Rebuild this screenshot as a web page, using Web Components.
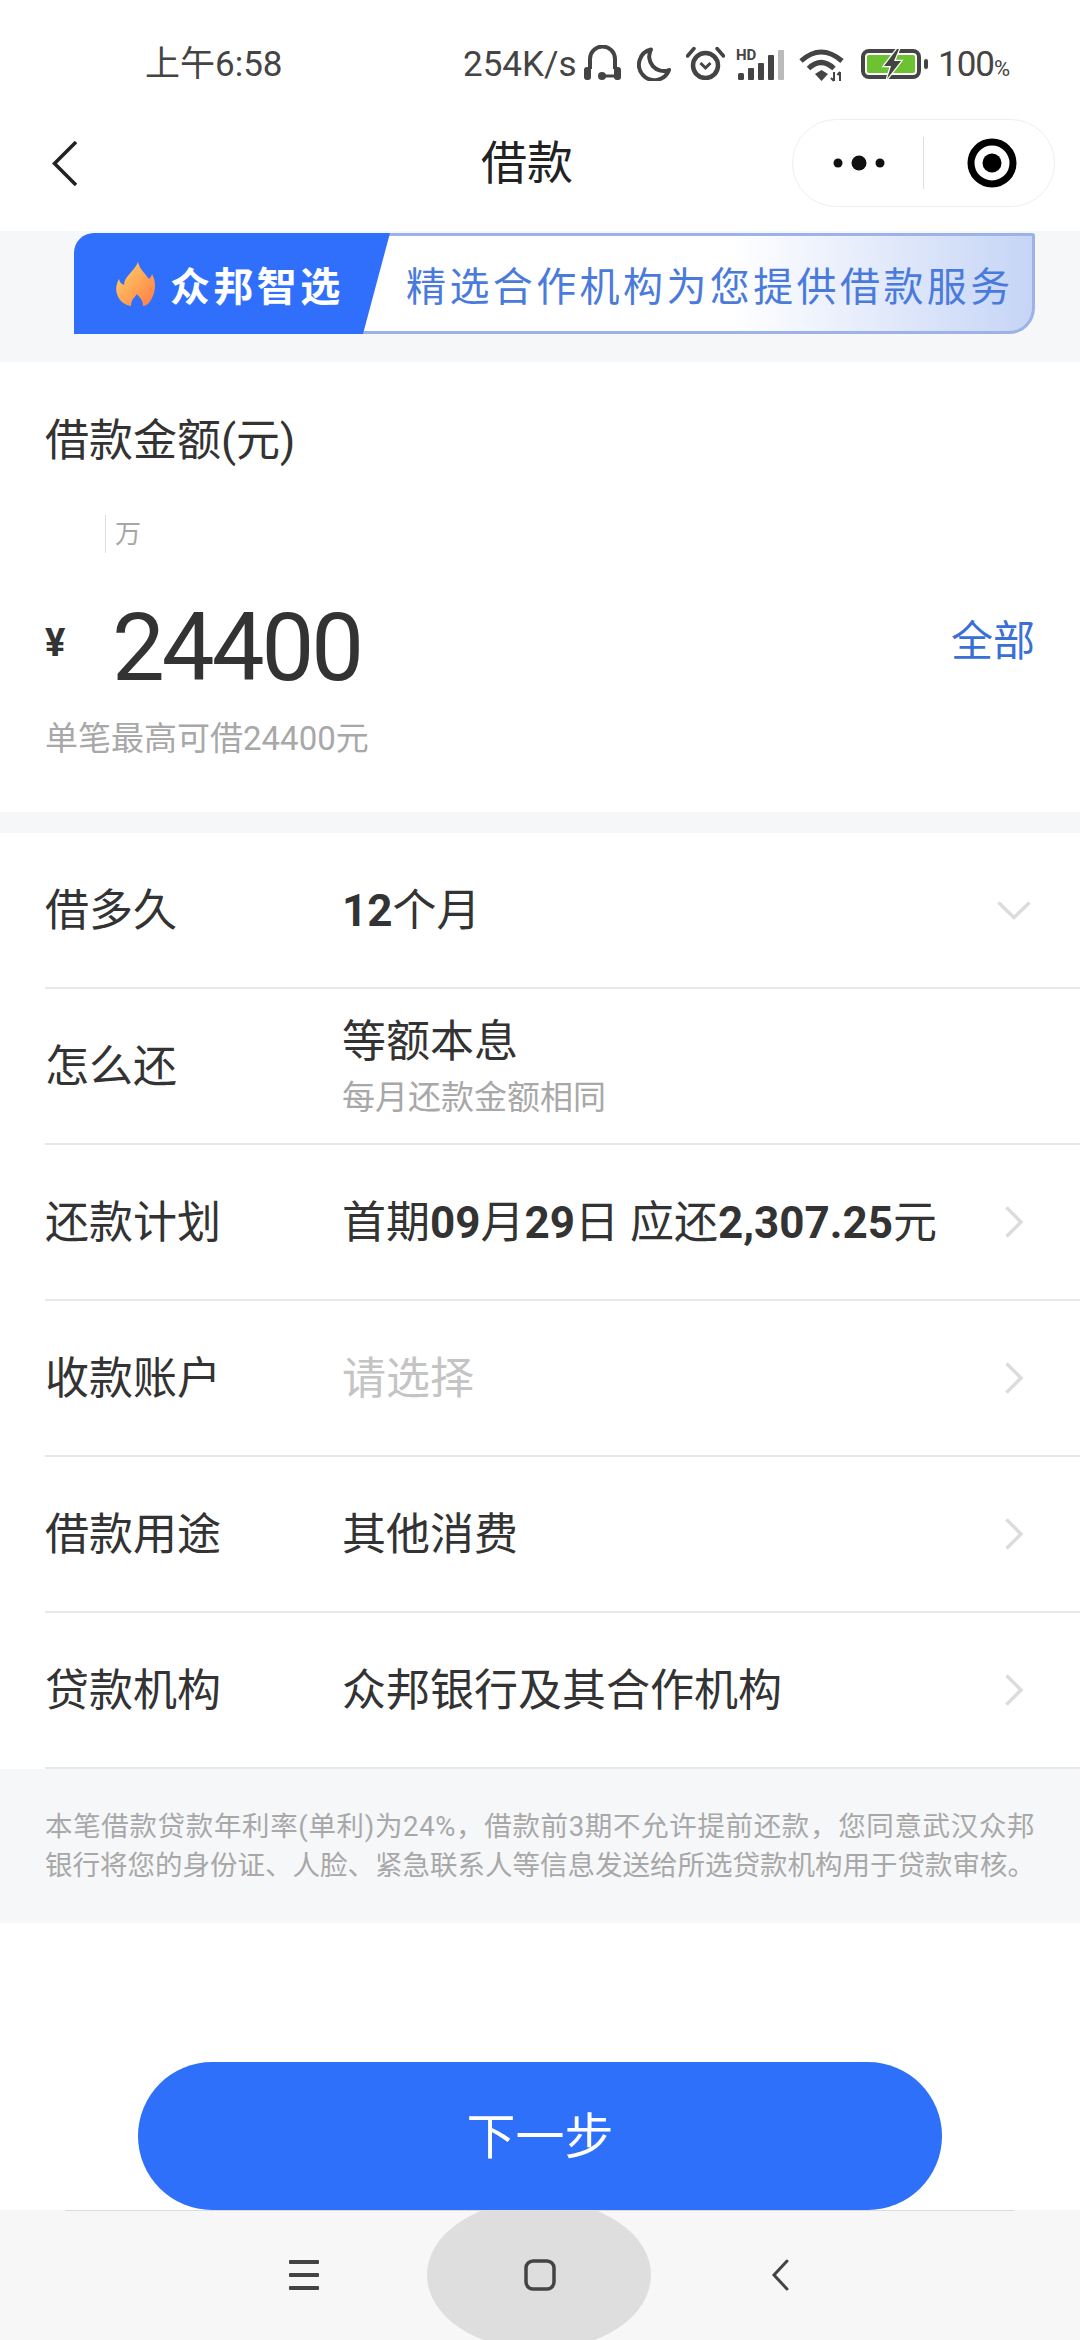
<!DOCTYPE html>
<html lang="zh">
<head>
<meta charset="utf-8">
<title>借款</title>
<style>
    html, body { margin: 0; padding: 0; background: #fff; }
    body {
        width: 1080px;
        height: 2340px;
        overflow: hidden;
        font-family: Roboto, "Noto Sans CJK SC", sans-serif;
        color: #333;
    }
    b { font-weight: 700; }
</style>
</head>
<body>
<loan-page>
    <status-bar></status-bar>
    <title-bar title="借款"></title-bar>
    <promo-banner></promo-banner>
    <amount-card></amount-card>
    <div style="height:21px;background:#f6f7f9"></div>
    <loan-row label="借多久" chevron="down"><span><b>12</b>个月</span></loan-row>
    <loan-row label="怎么还" chevron="none"><span>等额本息</span><span slot="sub">每月还款金额相同</span></loan-row>
    <loan-row label="还款计划"><span>首期<b>09</b>月<b>29</b>日 应还<b>2,307.25</b>元</span></loan-row>
    <loan-row label="收款账户"><span style="color:#c4c4c4">请选择</span></loan-row>
    <loan-row label="借款用途"><span>其他消费</span></loan-row>
    <loan-row label="贷款机构"><span>众邦银行及其合作机构</span></loan-row>
    <loan-note>
        <span style="letter-spacing:.65px">本笔借款贷款年利率(单利)为24%，借款前3期不允许提前还款，您同意武汉众邦</span><br>银行将您的身份证、人脸、紧急联系人等信息发送给所选贷款机构用于贷款审核。
    </loan-note>
    <next-button>下一步</next-button>
    <nav-keys></nav-keys>
</loan-page>

<script>
class LoanPage extends HTMLElement {
    constructor() {
        super();
        this.attachShadow({ mode: 'open' });
        this.shadowRoot.innerHTML = `
        <style>
            :host { display: flex; flex-direction: column; width: 1080px; height: 2340px; }
        </style>
        <slot></slot>`;
    }
}

class StatusBar extends HTMLElement {
    constructor() {
        super();
        this.attachShadow({ mode: 'open' });
        this.shadowRoot.innerHTML = `
        <style>
            :host {
                display: flex;
                align-items: flex-start;
                height: 100px;
                padding: 45px 69px 0 145px;
                box-sizing: border-box;
                color: #444;
            }
            .time { font-size: 35px; line-height: 40px; }
            .right { margin-left: auto; display: flex; align-items: flex-start; }
            .speed { font-size: 35px; line-height: 40px; width: 112px; white-space: nowrap; }
            .pct { font-size: 35px; line-height: 40px; letter-spacing: -1px; margin-left: 10px; width: 73px; white-space: nowrap; }
            .pct small { font-size: 22px; letter-spacing: 0; }
            svg { display: block; flex: none; }
        </style>
        <div class="time">上午6:58</div>
        <div class="right">
            <div class="speed">254K/s</div>
            <svg style="margin-left:9px" width="37" height="35" viewBox="0 0 37 35" fill="none" stroke="#444" stroke-width="4">
                <path d="M6 24V14a12.5 12.5 0 0 1 25 0v10"/>
                <rect x="0" y="22" width="7" height="13" rx="3" fill="#444" stroke="none"/>
                <rect x="30" y="22" width="7" height="13" rx="3" fill="#444" stroke="none"/>
                <path d="M32 31H20" stroke-width="3"/>
                <circle cx="18" cy="31" r="4" fill="#444" stroke="none"/>
            </svg>
            <svg style="margin:2px 0 0 16px" width="34" height="34" viewBox="0 0 34 34" fill="none" stroke="#444" stroke-width="4" stroke-linejoin="round">
                <path d="M14 2.5A15.5 15.5 0 1 0 32 23 A14.5 14.5 0 0 1 14 2.5Z"/>
            </svg>
            <svg style="margin:1px 0 0 15px" width="39" height="34" viewBox="0 0 39 34" fill="none" stroke="#444">
                <circle cx="19.5" cy="19.5" r="12.5" stroke-width="4.5"/>
                <path d="M14.5 17l5 5 5-5" stroke-width="3"/>
                <path d="M1.5 10L8 2.5M37.5 10L31 2.5" stroke-width="3.5" stroke-linecap="round"/>
            </svg>
            <svg style="margin:0 0 0 11px" width="50" height="35" viewBox="0 -3 50 35">
                <text x="0" y="12" font-family="Roboto, sans-serif" font-size="15" font-weight="700" fill="#444">HD</text>
                <rect x="2" y="25" width="6" height="7" rx="1.5" fill="#444"/>
                <rect x="12" y="20" width="6" height="12" rx="1" fill="#444"/>
                <rect x="22" y="15" width="6" height="17" rx="1" fill="#444"/>
                <rect x="32" y="7" width="6" height="25" rx="1" fill="#444"/>
                <rect x="42" y="2" width="6" height="30" rx="1" fill="#bbb"/>
            </svg>
            <svg style="margin:3px 0 0 13px" width="46" height="34" viewBox="0 0 46 34" fill="none" stroke="#444">
                <path d="M2 13Q22-5 43 13" stroke-width="5"/>
                <path d="M9.5 20.500Q22 8.500 35 20.500" stroke-width="5"/>
                <path d="M16 26L22.500 22 29 26 22.500 33Z" fill="#444" stroke="none"/>
                <path d="M35 24v9M32 30l3 3M41 33v-9M38.500 27l2.500-3" stroke-width="2"/>
            </svg>
            <svg style="margin:4px 0 0 16px" width="67" height="30" viewBox="0 0 67 30">
                <rect x="2" y="2" width="56" height="26" rx="6" fill="none" stroke="#444" stroke-width="4"/>
                <rect x="6" y="6" width="48" height="18" rx="2" fill="#6cc230"/>
                <rect x="63" y="10" width="4" height="10" rx="2" fill="#444"/>
                <path d="M36 0L23 17h7l-4 13 14-18h-7l5-12Z" fill="#444" stroke="#fff" stroke-width="2.5" paint-order="stroke"/>
            </svg>
            <div class="pct">100<small>%</small></div>
        </div>`;
    }
}

class TitleBar extends HTMLElement {
    constructor() {
        super();
        this.attachShadow({ mode: 'open' });
    }

    connectedCallback() {
        this.shadowRoot.innerHTML = `
        <style>
            :host {
                display: grid;
                grid-template-columns: 429px 92px 1fr;
                align-items: center;
                height: 126px;
                margin-bottom: 5px;
                padding: 0 25px 0 52px;
                box-sizing: border-box;
                color: #222;
            }
            .title { font-size: 46px; line-height: 60px; white-space: nowrap; }
            .capsule {
                justify-self: end;
                display: flex;
                align-items: center;
                width: 263px;
                height: 88px;
                box-sizing: border-box;
                border: 1px solid #eee;
                border-radius: 44px;
            }
            .more { width: 130px; display: flex; justify-content: center; padding-left: 2px; box-sizing: border-box; }
            .sep { width: 1px; height: 52px; background: #ddd; }
            .target { flex: 1; display: flex; justify-content: center; margin-left: 6px; }
            svg { display: block; }
        </style>
        <svg width="25" height="45" viewBox="0 0 25 45" fill="none" stroke="#222" stroke-width="3.5">
            <path d="M24 1L2.5 22.5 24 44"/>
        </svg>
        <div class="title">${this.getAttribute('title')}</div>
        <div class="capsule">
            <div class="more">
                <svg width="52" height="16" viewBox="0 0 52 16" fill="#111">
                    <circle cx="5" cy="8" r="4.5"/>
                    <circle cx="26" cy="8" r="7.5"/>
                    <circle cx="47" cy="8" r="4.5"/>
                </svg>
            </div>
            <div class="sep"></div>
            <div class="target">
                <svg width="50" height="50" viewBox="0 0 50 50">
                    <circle cx="25" cy="25" r="21" fill="none" stroke="#000" stroke-width="7"/>
                    <circle cx="25" cy="25" r="9.5" fill="#000"/>
                </svg>
            </div>
        </div>`;
    }
}

class PromoBanner extends HTMLElement {
    constructor() {
        super();
        this.attachShadow({ mode: 'open' });
        this.shadowRoot.innerHTML = `
        <style>
            :host {
                display: block;
                background: #f6f7f9;
                padding: 2px 45px 28px 74px;
            }
            .banner { display: flex; height: 101px; }
            .tag {
                flex: none;
                z-index: 1;
                width: 316px;
                box-sizing: border-box;
                display: flex;
                align-items: center;
                padding-left: 42px;
                background: #2f6ffb;
                border-top-left-radius: 20px;
                clip-path: polygon(0 0, 100% 0, 289px 100%, 0 100%);
                color: #fff;
                font-size: 40px;
                font-weight: 700;
                letter-spacing: 3.4px;
            }
            .tag svg { flex: none; margin-right: 15px; }
            .slogan {
                flex: 1;
                margin-left: -27px;
                padding-left: 43px;
                display: flex;
                align-items: center;
                box-sizing: border-box;
                white-space: nowrap;
                background: linear-gradient(90deg, #fff 55%, #c6d5f6 100%);
                border: solid #9db2e8;
                border-width: 3px 3px 3px 0;
                border-radius: 0 3px 26px 0;
                color: #4a7bdc;
                font-size: 40px;
                letter-spacing: 3.4px;
            }
        </style>
        <div class="banner">
            <div class="tag">
                <svg width="39" height="44" viewBox="0 0 39 44">
                    <defs>
                        <linearGradient id="fl" x1="0" y1="0" x2="1" y2="1">
                            <stop offset="0" stop-color="#ffd76a"/>
                            <stop offset="1" stop-color="#ff7a45"/>
                        </linearGradient>
                    </defs>
                    <path d="M22 0C24 8 29 11 33 17C36 14 36 12 36 12C40 19 40 28 36 36C34 41 30 44 27 44C27 38 24 36 21 32C18 36 15 38 15 44C8 43 2 38 .5 30C-.5 25 1 21 3 17C4 21 6 22 8 23C8 14 18 10 22 0Z" fill="url(#fl)"/>
                </svg>
                众邦智选
            </div>
            <div class="slogan">精选合作机构为您提供借款服务</div>
        </div>`;
    }
}

class AmountCard extends HTMLElement {
    constructor() {
        super();
        this.attachShadow({ mode: 'open' });
        this.shadowRoot.innerHTML = `
        <style>
            :host {
                display: block;
                height: 450px;
                box-sizing: border-box;
                padding: 47px 45px 0;
            }
            .label { font-size: 44px; line-height: 64px; }
            .unit {
                margin: 42px 0 0 60px;
                height: 38px;
                padding-left: 9px;
                border-left: 1px solid #ddd;
                color: #a6a6a6;
                font-size: 26px;
                line-height: 38px;
            }
            .amount { display: flex; align-items: center; margin-top: 45px; height: 100px; }
            .yen { width: 67px; font-size: 38px; font-weight: 700; line-height: 50px; margin-top: -10px; }
            .num { font-size: 94px; line-height: 100px; letter-spacing: -3px; color: #333; }
            .all { margin-left: auto; color: #3a6fd8; font-size: 42px; line-height: 60px; margin-top: -12px; }
            .tip { margin-top: 19px; color: #a8a8a8; font-size: 33px; line-height: 44px; }
        </style>
        <div class="label">借款金额(元)</div>
        <div class="unit">万</div>
        <div class="amount">
            <div class="yen">¥</div>
            <div class="num">24400</div>
            <div class="all">全部</div>
        </div>
        <div class="tip">单笔最高可借24400元</div>`;
    }
}

class LoanRow extends HTMLElement {
    constructor() {
        super();
        this.attachShadow({ mode: 'open' });
    }

    connectedCallback() {
        const chevron = this.getAttribute('chevron') || 'right';
        let icon = '';
        if (chevron === 'right') {
            icon = '<svg width="18" height="32" viewBox="0 0 18 32" fill="none" stroke="#dcdcdc" stroke-width="3.5"><path d="M1.5 1.5L16 16 1.5 30.5"/></svg>';
        } else if (chevron === 'down') {
            icon = '<svg width="34" height="19" viewBox="0 0 34 19" fill="none" stroke="#dcdcdc" stroke-width="3.5"><path d="M1.5 1.5L17 16.5 32.5 1.5"/></svg>';
        }
        this.shadowRoot.innerHTML = `
        <style>
            :host { display: block; padding-left: 45px; height: 156px; box-sizing: border-box; }
            .row {
                display: flex;
                align-items: center;
                height: 100%;
                box-sizing: border-box;
                border-bottom: 2px solid #e8e8e8;
                font-size: 44px;
                line-height: 56px;
                color: #333;
            }
            .label { width: 297px; flex: none; padding-top: 2px; }
            .value { flex: 1; display: flex; flex-direction: column; white-space: nowrap; padding-top: 2px; }
            .sub { color: #a8a8a8; font-size: 33px; line-height: 44px; margin-top: 6px; }
            .icon { width: 90px; flex: none; display: flex; justify-content: center; padding-right: 42px; box-sizing: border-box; }
            svg { display: block; flex: none; }
            ::slotted(span) { display: block; }
        </style>
        <div class="row">
            <div class="label">${this.getAttribute('label')}</div>
            <div class="value">
                <slot></slot>
                ${this.querySelector('[slot=sub]') ? '<div class="sub"><slot name="sub"></slot></div>' : ''}
            </div>
            <div class="icon">${icon}</div>
        </div>`;
    }
}

class LoanNote extends HTMLElement {
    constructor() {
        super();
        this.attachShadow({ mode: 'open' });
        this.shadowRoot.innerHTML = `
        <style>
            :host {
                display: block;
                background: #f6f7f9;
                height: 154px;
                box-sizing: border-box;
                padding: 39px 30px 0 45px;
                color: #a8a8a8;
                font-size: 27.5px;
                line-height: 38.5px;
                white-space: nowrap;
            }
        </style>
        <slot></slot>`;
    }
}

class NextButton extends HTMLElement {
    constructor() {
        super();
        this.attachShadow({ mode: 'open' });
        this.shadowRoot.innerHTML = `
        <style>
            :host {
                display: flex;
                justify-content: center;
                align-items: center;
                flex: none;
                width: 804px;
                height: 148px;
                box-sizing: border-box;
                padding-bottom: 8px;
                margin: 139px 0 0 138px;
                border-radius: 74px;
                background: #2f70fb;
                color: #fff;
                font-size: 49px;
            }
        </style>
        <slot></slot>`;
    }
}

class NavKeys extends HTMLElement {
    constructor() {
        super();
        this.attachShadow({ mode: 'open' });
        this.shadowRoot.innerHTML = `
        <style>
            :host {
                display: block;
                position: relative;
                height: 130px;
                overflow: hidden;
                background: #f7f7f7;
            }
            .line { position: absolute; left: 65px; right: 66px; top: 0; height: 1px; background: #dcdcdc; }
            .keys {
                display: grid;
                grid-template-columns: repeat(3, 224px);
                justify-content: center;
                column-gap: 12px;
                height: 100%;
            }
            .key { display: flex; justify-content: center; align-items: center; }
            .home { position: relative; }
            .home::before {
                content: '';
                position: absolute;
                left: -1px;
                right: 1px;
                top: -10px;
                bottom: -10px;
                border-radius: 50%;
                background: #dedede;
            }
            svg { display: block; position: relative; }
        </style>
        <div class="line"></div>
        <div class="keys">
            <div class="key">
                <svg width="30" height="30" viewBox="0 0 30 30" fill="#444">
                    <rect x="0" y="0" width="30" height="4" rx="1"/>
                    <rect x="0" y="13" width="30" height="4" rx="1"/>
                    <rect x="0" y="26" width="30" height="4" rx="1"/>
                </svg>
            </div>
            <div class="key home">
                <svg width="32" height="32" viewBox="0 0 32 32" fill="none" stroke="#444" stroke-width="3.5">
                    <rect x="2" y="2" width="28" height="28" rx="7"/>
                </svg>
            </div>
            <div class="key" style="padding-left:8px">
                <svg width="18" height="32" viewBox="0 0 18 32" fill="none" stroke="#444" stroke-width="3" stroke-linecap="round">
                    <path d="M16 2L3 16l13 14"/>
                </svg>
            </div>
        </div>`;
    }
}

customElements.define('loan-page', LoanPage);
customElements.define('status-bar', StatusBar);
customElements.define('title-bar', TitleBar);
customElements.define('promo-banner', PromoBanner);
customElements.define('amount-card', AmountCard);
customElements.define('loan-row', LoanRow);
customElements.define('loan-note', LoanNote);
customElements.define('next-button', NextButton);
customElements.define('nav-keys', NavKeys);
</script>
</body>
</html>
